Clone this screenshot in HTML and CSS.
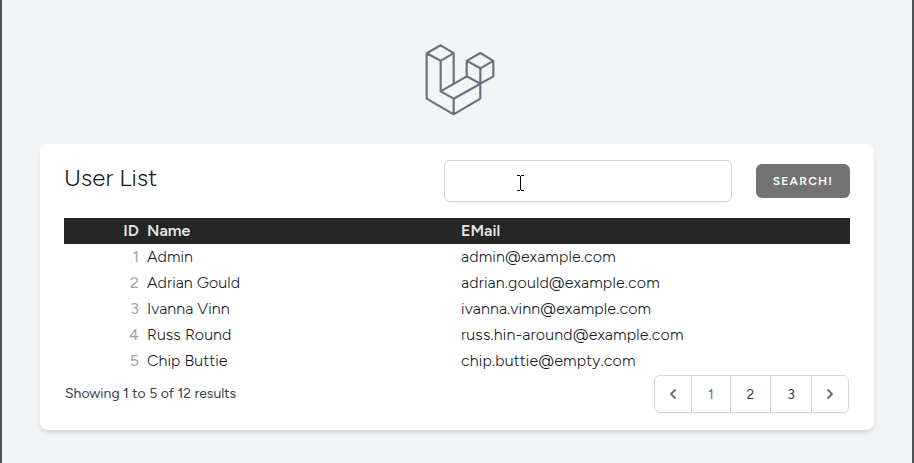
FILE: index.html
```html
<!DOCTYPE html>
<html lang="en">
<head>
<meta charset="utf-8">
<title>User List</title>
<link rel="stylesheet" href="styles.css">
</head>
<body>
<main class="page">
  <a class="logo" aria-label="Home">
    <svg width="100" height="90" viewBox="0 0 300 270" fill="none" stroke="#6b7280" stroke-width="6.6" stroke-linejoin="round" stroke-linecap="round">
      <path d="M92 31 50 54.500V191L131 238 211 191V100M92 31 131 54.500V145M50 54.500 92 77.500 131 54.500M92 77.500V169L131 191 211 146M131 191V238M92 169 170 124 211 146 250 124V77.500L211 54 170 77.500V124M170 77.500 211 100 250 77.500"/>
    </svg>
  </a>
  <section class="card">
    <header class="toolbar">
      <h1 class="title"><span>User List</span></h1>
      <div class="field">
        <input class="search" type="text" aria-label="Search">
        <svg class="cursor" width="7" height="16" viewBox="0 0 7 16" fill="none" stroke="#000" shape-rendering="crispEdges"><path d="M0 .5H3M4 .5H7M3.500 1V15M0 15.500H3M4 15.500H7"/></svg>
      </div>
      <button class="button"><span>SEARCH!</span></button>
    </header>
    <table class="users">
      <thead><tr><th class="id"><span>ID</span></th><th class="name"><span>Name</span></th><th><span>EMail</span></th></tr></thead>
      <tbody>
        <tr><td class="id">1</td><td><span>Admin</span></td><td class="email"><span>admin@example.com</span></td></tr>
        <tr><td class="id">2</td><td><span>Adrian Gould</span></td><td class="email"><span>adrian.gould@example.com</span></td></tr>
        <tr><td class="id">3</td><td><span>Ivanna Vinn</span></td><td class="email"><span>ivanna.vinn@example.com</span></td></tr>
        <tr><td class="id">4</td><td><span>Russ Round</span></td><td class="email"><span>russ.hin-around@example.com</span></td></tr>
        <tr><td class="id">5</td><td><span>Chip Buttie</span></td><td class="email"><span>chip.buttie@empty.com</span></td></tr>
      </tbody>
    </table>
    <footer class="footer">
      <p class="summary">Showing <b>1</b> to <b>5</b> of <b>12</b> results</p>
      <nav class="pager">
        <a class="prev"><svg width="20" height="20" viewBox="0 0 20 20" fill="#6b7280"><path fill-rule="evenodd" clip-rule="evenodd" d="M12.707 5.293a1 1 0 010 1.414L9.414 10l3.293 3.293a1 1 0 01-1.414 1.414l-4-4a1 1 0 010-1.414l4-4a1 1 0 011.414 0z"/></svg></a>
        <a class="current">1</a>
        <a class="two">2</a>
        <a class="three">3</a>
        <a class="next"><svg width="20" height="20" viewBox="0 0 20 20" fill="#6b7280"><path fill-rule="evenodd" clip-rule="evenodd" d="M7.293 14.707a1 1 0 010-1.414L10.586 10 7.293 6.707a1 1 0 011.414-1.414l4 4a1 1 0 010 1.414l-4 4a1 1 0 01-1.414 0z"/></svg></a>
      </nav>
    </footer>
  </section>
</main>
</body>
</html>
```
FILE: styles.css
```css
* { box-sizing: border-box; }
body { margin: 0; font-family: Figtree, Lato, sans-serif; color: #111827; }
.page {
  height: 463px;
  padding: 35px 38px 0;
  background: #f3f4f6;
  border: solid #515256;
  border-width: 0 2px;
  overflow: hidden;
}
.logo { display: block; height: 90px; margin: 0 0 19px 370px; }
.logo svg { display: block; }
.card {
  height: 286px;
  padding: 16px 24px 0;
  background: #fff;
  border-radius: 8px;
  box-shadow: 0 4px 6px -1px rgba(0,0,0,.1), 0 2px 4px -2px rgba(0,0,0,.1);
}
.toolbar { display: flex; align-items: center; height: 42px; margin-bottom: 16px; }
.title { flex: 1; margin: 0; padding-bottom: 6px; font-size: 24px; line-height: 32px; font-weight: 340; letter-spacing: .05px; }
.field { position: relative; width: 288px; height: 42px; margin-right: 24px; }
.search {
  display: block; width: 100%; height: 100%;
  border: 1px solid #d1d5db; border-radius: 6px; background: #fff;
  box-shadow: 0 1px 2px rgba(0,0,0,.05); outline: none;
}
.cursor { position: absolute; left: 73px; top: 15px; }
.button {
  width: 94px; height: 34px; padding: 0;
  border: 0; border-radius: 6px; background: #737373; color: #fff;
  font: 600 12px/16px Figtree, Lato, sans-serif; letter-spacing: 1.25px;
}
.users { width: 786px; border-collapse: collapse; table-layout: fixed; font-size: 16px; line-height: 24px; }
.users th, .users td { height: 26px; padding: 0 4px; text-align: left; font-weight: 340; letter-spacing: .05px; }
.users .email { letter-spacing: .15px; }
.users thead { background: #262626; color: #e5e5e5; }
.users th { font-weight: 600; letter-spacing: 0; }
.users .id { width: 79px; text-align: right; }
.users td.id { color: #a3a3a3; font-weight: 400; letter-spacing: 0; }
.users .name { width: 314px; }
.footer { display: flex; justify-content: space-between; margin: 1px 1px 0; }
.summary { margin: 9px 0 0; font-size: 14px; line-height: 20px; color: #374151; }
.summary b { font-weight: 450; }
.pager {
  display: flex; width: 195px; height: 38px;
  border: 1px solid #d1d5db; border-radius: 6px;
  box-shadow: 0 1px 2px rgba(0,0,0,.05);
  font-size: 14px; font-weight: 450; color: #374151;
}
.pager a { display: flex; align-items: center; justify-content: center; width: 40px; border-left: 1px solid #d1d5db; }
.pager .prev { width: 36px; border: 0; }
.pager .current { width: 39px; color: #6b7280; }
.pager .three { width: 41px; }
.pager .next { flex: 1; }
```
